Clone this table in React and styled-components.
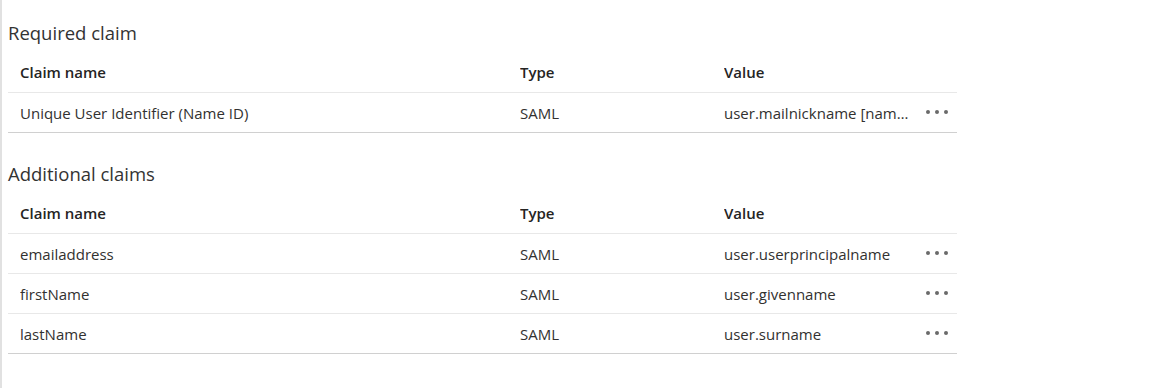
import React from 'react';
import styled, { createGlobalStyle } from 'styled-components';

const GlobalStyle = createGlobalStyle`
  html, body {
    margin: 0;
    padding: 0;
    background: #fff;
  }
  body {
    font-family: 'Open Sans', 'Noto Sans', sans-serif;
    color: #323130;
  }
`;

const Page = styled.div`
  min-height: 388px;
  box-sizing: border-box;
  border-left: 2px solid #e1e1e1;
  padding: 21px 0 0 6px;
`;

const Section = styled.section`
  width: 949px;
  margin-bottom: 29px;
`;

const Title = styled.h2`
  margin: 0 0 7px;
  font-size: 18.5px;
  font-weight: 400;
  line-height: 24px;
  color: #333;
`;

const Table = styled.div`
  display: flex;
  flex-direction: column;
`;

const Row = styled.div`
  display: grid;
  grid-template-columns: 500px 204px 1fr 33px;
  align-items: center;
  height: ${({ $head }) => ($head ? '40px' : '39px')};
  padding-left: 12px;
  border-bottom: 1px solid ${({ $last }) => ($last ? '#d0d0d0' : '#e8e8e8')};
  font-size: 15px;
  font-weight: ${({ $head }) => ($head ? 600 : 400)};
  color: ${({ $head }) => ($head ? '#252423' : '#323130')};
`;

const Cell = styled.div`
  white-space: nowrap;
  overflow: hidden;
  text-overflow: ellipsis;
  max-width: ${({ $narrow }) => ($narrow ? '190px' : 'none')};
`;

const More = styled.button`
  display: flex;
  gap: 5px;
  justify-content: flex-start;
  align-items: center;
  padding: 0 0 0 2px;
  margin-top: -1px;
  border: 0;
  background: none;
  height: 20px;

  span {
    width: 4px;
    height: 4px;
    border-radius: 50%;
    background: #6a6a6a;
  }
`;

const ClaimTable = ({ rows }) => (
  <Table>
    <Row $head>
      <Cell>Claim name</Cell>
      <Cell>Type</Cell>
      <Cell>Value</Cell>
      <span />
    </Row>
    {rows.map((r, i) => (
      <Row key={r.name} $last={i === rows.length - 1}>
        <Cell>{r.name}</Cell>
        <Cell>{r.type}</Cell>
        <Cell $narrow>{r.value}</Cell>
        <More aria-label="More">
          <span />
          <span />
          <span />
        </More>
      </Row>
    ))}
  </Table>
);

const required = [
  {
    name: 'Unique User Identifier (Name ID)',
    type: 'SAML',
    value: 'user.mailnickname [nameid-format:emailAddress]',
  },
];

const additional = [
  { name: 'emailaddress', type: 'SAML', value: 'user.userprincipalname' },
  { name: 'firstName', type: 'SAML', value: 'user.givenname' },
  { name: 'lastName', type: 'SAML', value: 'user.surname' },
];

export default function App() {
  return (
    <>
      <GlobalStyle />
      <Page>
        <Section>
          <Title>Required claim</Title>
          <ClaimTable rows={required} />
        </Section>
        <Section>
          <Title>Additional claims</Title>
          <ClaimTable rows={additional} />
        </Section>
      </Page>
    </>
  );
}
